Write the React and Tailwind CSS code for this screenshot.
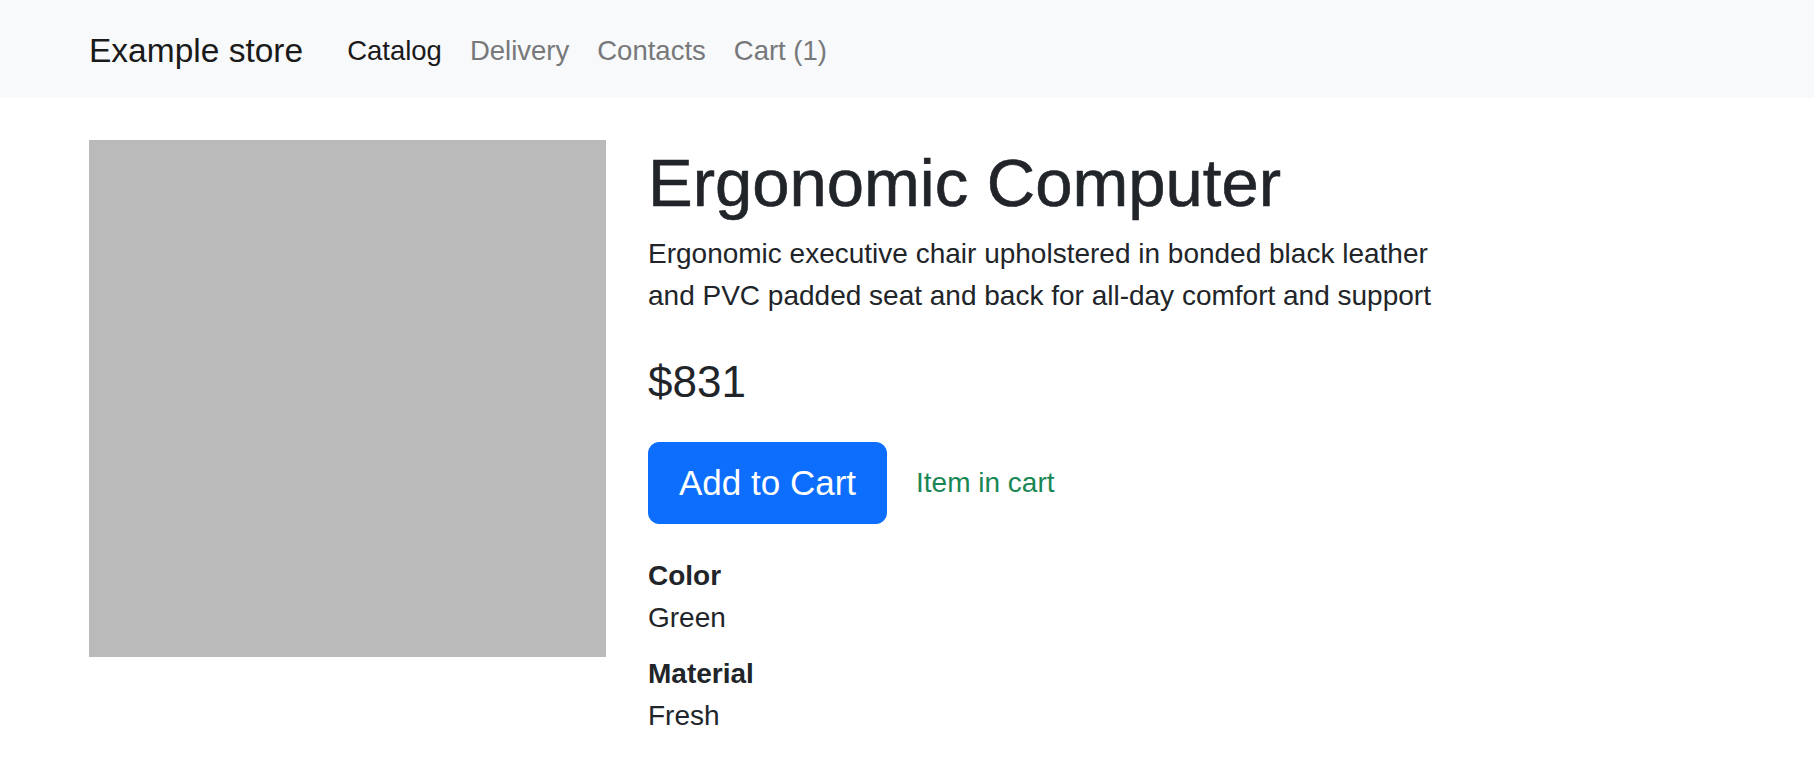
const product = {
  title: 'Ergonomic Computer',
  description:
    'Ergonomic executive chair upholstered in bonded black leather and PVC padded seat and back for all-day comfort and support',
  price: 831,
  attributes: [
    { name: 'Color', value: 'Green' },
    { name: 'Material', value: 'Fresh' },
  ],
}

const links = [
  { label: 'Catalog', active: true },
  { label: 'Delivery' },
  { label: 'Contacts' },
  { label: 'Cart (1)' },
]

function Navbar() {
  return (
    <nav className="h-[98px] bg-[#f8f9fa]">
      <div className="mx-auto flex h-full w-[1680px] items-center px-[22px] pt-[3px]">
        <a href="#" className="mr-[30px] text-[33.5px] leading-[51px] text-[#1a1a1a]">
          Example store
        </a>
        <ul className="flex">
          {links.map((link) => (
            <li key={link.label}>
              <a
                href="#"
                className={
                  'block px-[14px] text-[27.5px] leading-[42px] ' +
                  (link.active ? 'text-[#1a1a1a]' : 'text-[#77787a]')
                }
              >
                {link.label}
              </a>
            </li>
          ))}
        </ul>
      </div>
    </nav>
  )
}

export default function App() {
  return (
    <div className="min-h-screen bg-white font-['Liberation_Sans',Arial,sans-serif] text-[#212529]">
      <Navbar />

      <main className="mx-auto flex w-[1680px] gap-[42px] px-[22px] pt-[42px]">
        <div className="h-[517px] w-[517px] shrink-0 bg-[#bababa]" />

        <div className="flex flex-col">
          <h1 className="text-[67px] font-medium leading-[85px] [-webkit-text-stroke:0.6px_#212529]">
            {product.title}
          </h1>
          <p className="mt-[8px] w-[800px] text-[28px] leading-[42px]">{product.description}</p>

          <p className="mt-[37px] text-[44px] leading-[56px]">${product.price}</p>

          <div className="mt-[32px] flex items-center">
            <button
              type="button"
              className="flex h-[82px] items-center rounded-[11px] border border-[#0d6efd] bg-[#0d6efd] px-[30px] text-[35px] leading-[52px] text-white"
            >
              Add to Cart
            </button>
            <span className="ml-[29px] text-[28px] leading-[42px] text-[#198754]">Item in cart</span>
          </div>

          <dl className="mt-[31px] text-[28px] leading-[42px]">
            {product.attributes.map((attr) => (
              <div key={attr.name} className="mb-[14px]">
                <dt className="font-bold">{attr.name}</dt>
                <dd>{attr.value}</dd>
              </div>
            ))}
          </dl>
        </div>
      </main>
    </div>
  )
}
